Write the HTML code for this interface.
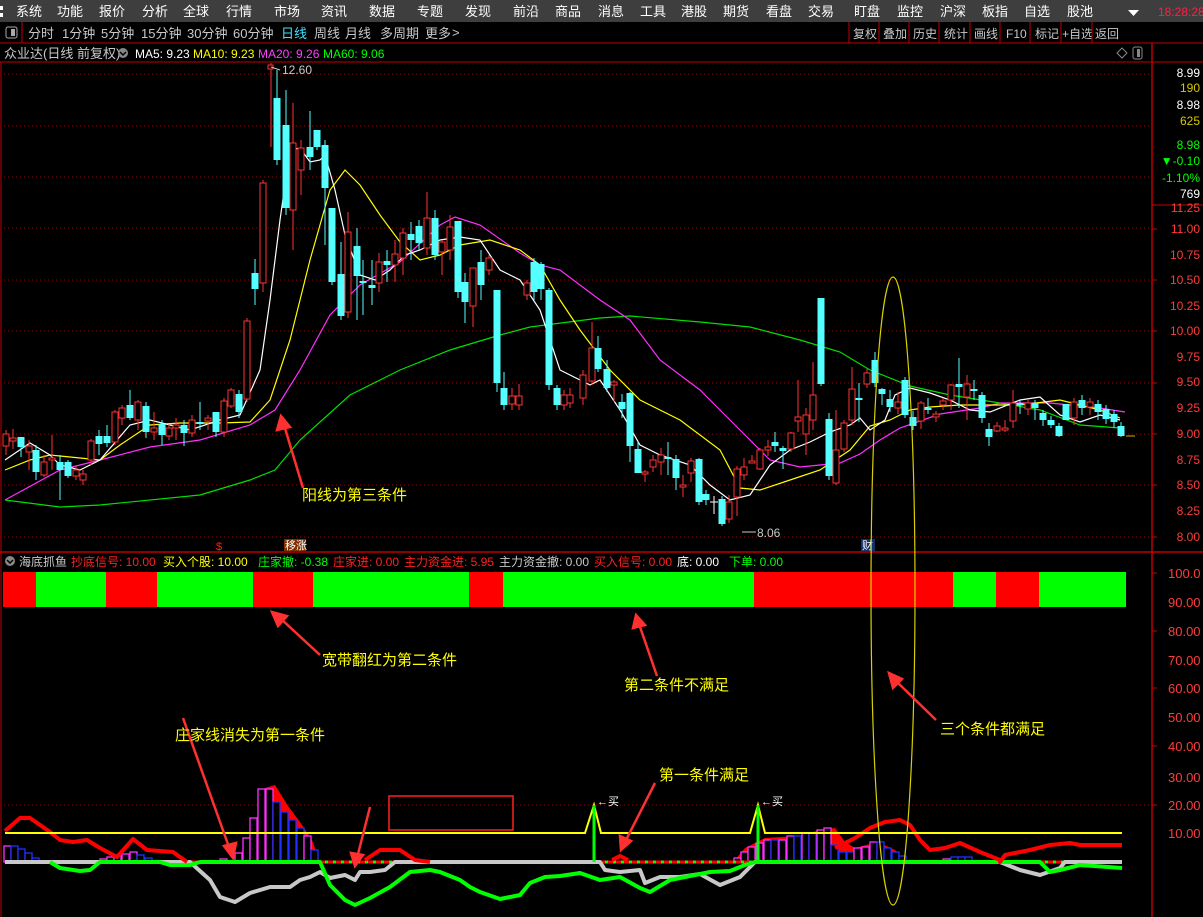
<!DOCTYPE html>
<html><head><meta charset="utf-8"><style>
html,body{margin:0;padding:0;background:#000;width:1203px;height:917px;overflow:hidden;font-family:"Liberation Sans","Noto Sans CJK SC",sans-serif}
svg{position:absolute;left:0;top:0}
.t{font-family:"Liberation Sans","Noto Sans CJK SC",sans-serif}
.c{stroke:#54ffff;stroke-width:1}
.cf{fill:#54ffff}
.r{stroke:#ff3232;stroke-width:1}
.rf{fill:#000;stroke:#ff3232;stroke-width:1}
.g{stroke:#a00000;stroke-dasharray:1 3;stroke-width:1}
</style></head><body>
<svg width="1203" height="917" xmlns="http://www.w3.org/2000/svg" class="t">
<rect x="0" y="0" width="1203" height="22" fill="#3e3e3e"/>
<rect x="0" y="6" width="3" height="4" fill="#fff"/><rect x="0" y="13" width="3" height="4" fill="#fff"/>
<g fill="#fff" font-size="13">
<text x="16" y="16">系统</text><text x="57" y="16">功能</text><text x="99" y="16">报价</text><text x="142" y="16">分析</text><text x="183" y="16">全球</text><text x="226" y="16">行情</text><text x="274" y="16">市场</text><text x="321" y="16">资讯</text><text x="369" y="16">数据</text><text x="417" y="16">专题</text><text x="465" y="16">发现</text><text x="513" y="16">前沿</text><text x="555" y="16">商品</text><text x="598" y="16">消息</text><text x="640" y="16">工具</text><text x="681" y="16">港股</text><text x="723" y="16">期货</text><text x="766" y="16">看盘</text><text x="808" y="16">交易</text><text x="854" y="16">盯盘</text><text x="897" y="16">监控</text><text x="940" y="16">沪深</text><text x="982" y="16">板指</text><text x="1024" y="16">自选</text><text x="1067" y="16">股池</text>
</g>
<path d="M1128 10 L1139 10 L1133.5 16 Z" fill="#fff"/>
<text x="1158" y="16" fill="#ff2040" font-size="12">18:28:28</text>
<line x1="0" y1="43" x2="1203" y2="43" stroke="#c00000"/>
<line x1="22" y1="22" x2="22" y2="43" stroke="#c00000"/>
<rect x="6" y="27" width="11" height="11" rx="2" fill="none" stroke="#aaa"/><rect x="11" y="29" width="4" height="7" fill="#aaa"/>
<g fill="#c8c8c8" font-size="13">
<text x="28" y="38">分时</text><text x="62" y="38">1分钟</text><text x="101" y="38">5分钟</text><text x="141" y="38">15分钟</text><text x="187" y="38">30分钟</text><text x="233" y="38">60分钟</text><text x="281" y="38" fill="#40e0ff">日线</text><text x="314" y="38">周线</text><text x="345" y="38">月线</text><text x="380" y="38">多周期</text><text x="425" y="38">更多</text><text x="452" y="37">&gt;</text>
</g>
<g fill="#c8c8c8" font-size="12">
<text x="853" y="38">复权</text><text x="883" y="38">叠加</text><text x="913" y="38">历史</text><text x="944" y="38">统计</text><text x="974" y="38">画线</text><text x="1006" y="38">F10</text><text x="1035" y="38">标记</text><text x="1062" y="38">+自选</text><text x="1095" y="38">返回</text>
</g>
<g stroke="#c00000"><line x1="849" y1="22" x2="849" y2="43"/><line x1="879" y1="22" x2="879" y2="43"/><line x1="909" y1="22" x2="909" y2="43"/><line x1="939" y1="22" x2="939" y2="43"/><line x1="970" y1="22" x2="970" y2="43"/><line x1="1000" y1="22" x2="1000" y2="43"/><line x1="1030" y1="22" x2="1030" y2="43"/><line x1="1061" y1="22" x2="1061" y2="43"/><line x1="1092" y1="22" x2="1092" y2="43"/></g>
<text x="4" y="58" fill="#c8c8c8" font-size="13">众业达(日线 前复权)</text>
<circle cx="123" cy="53" r="5" fill="#888"/><path d="M120 52 L123 55 L126 52" stroke="#000" fill="none" stroke-width="1.5"/>
<g font-size="12"><text x="135" y="58" fill="#fff">MA5: 9.23</text><text x="193" y="58" fill="#ffff00">MA10: 9.23</text><text x="258" y="58" fill="#ff40ff">MA20: 9.26</text><text x="323" y="58" fill="#00ff00">MA60: 9.06</text></g>
<path d="M1122 48 L1127 53 L1122 58 L1117 53 Z" fill="none" stroke="#888"/>
<rect x="1133" y="47" width="9" height="12" rx="2" fill="none" stroke="#888"/><rect x="1137" y="49" width="3" height="8" fill="#888"/>
<line x1="0" y1="62" x2="1203" y2="62" stroke="#c00000"/>
<line x1="1152" y1="43" x2="1152" y2="917" stroke="#c00000" stroke-width="1.5"/>
<line x1="1" y1="62" x2="1" y2="917" stroke="#c00000"/>
<line x1="0" y1="552" x2="1152" y2="552" stroke="#c00000" stroke-width="1.5"/>
<line x1="1152" y1="552" x2="1203" y2="552" stroke="#c00000" stroke-width="1.5"/>
<line x1="1152" y1="205" x2="1203" y2="205" stroke="#c00000"/>
<g font-size="12" text-anchor="end">
<text x="1200" y="77" fill="#fff">8.99</text><text x="1200" y="92" fill="#d8c800">190</text><text x="1200" y="109" fill="#fff">8.98</text><text x="1200" y="125" fill="#d8c800">625</text><text x="1200" y="149" fill="#00ff00">8.98</text><text x="1200" y="165" fill="#00ff00">▼-0.10</text><text x="1200" y="182" fill="#00ff00">-1.10%</text><text x="1200" y="198" fill="#fff">769</text>
</g>
<g font-size="12" fill="#ff3c3c" text-anchor="end">
<text x="1200" y="212">11.25</text><text x="1200" y="233">11.00</text><text x="1200" y="259">10.75</text><text x="1200" y="284">10.50</text><text x="1200" y="310">10.25</text><text x="1200" y="335">10.00</text><text x="1200" y="361">9.75</text><text x="1200" y="386">9.50</text><text x="1200" y="412">9.25</text><text x="1200" y="438">9.00</text><text x="1200" y="464">8.75</text><text x="1200" y="489">8.50</text><text x="1200" y="515">8.25</text><text x="1200" y="541">8.00</text>
</g>
<g stroke="#c00000"><line x1="1152" y1="229" x2="1157" y2="229"/><line x1="1152" y1="280" x2="1157" y2="280"/><line x1="1152" y1="331" x2="1157" y2="331"/><line x1="1152" y1="383" x2="1157" y2="383"/><line x1="1152" y1="434" x2="1157" y2="434"/><line x1="1152" y1="485" x2="1157" y2="485"/><line x1="1152" y1="537" x2="1157" y2="537"/></g>
<g class="g"><line x1="4" y1="74" x2="1150" y2="74"/><line x1="4" y1="126" x2="1150" y2="126"/><line x1="4" y1="177" x2="1150" y2="177"/><line x1="4" y1="228" x2="1150" y2="228"/><line x1="4" y1="280" x2="1150" y2="280"/><line x1="4" y1="331" x2="1150" y2="331"/><line x1="4" y1="383" x2="1150" y2="383"/><line x1="4" y1="434" x2="1150" y2="434"/><line x1="4" y1="485" x2="1150" y2="485"/><line x1="4" y1="537" x2="1150" y2="537"/></g>
<g fill="none" stroke-width="1.2">
<polyline stroke="#00e000" points="5,500 60,507 100,505 200,495 250,480 275,470 300,440 350,395 400,370 450,350 500,335 530,327 600,318 630,316 700,322 750,327 800,340 840,352 870,370 910,386 950,395 1000,403 1040,410 1080,425 1120,428"/>
<polyline stroke="#ff30ff" points="5,500 60,470 100,460 150,447 200,440 250,425 275,410 300,370 330,315 360,285 400,262 440,225 455,217 480,225 520,253 540,265 560,270 600,300 630,320 660,360 700,390 730,420 770,460 800,467 840,463 860,454 880,440 900,428 940,414 980,408 1000,403 1050,403 1100,408 1125,412"/>
<polyline stroke="#ffff00" points="5,470 30,460 50,455 80,458 100,460 120,445 150,425 180,423 220,423 250,422 270,400 290,340 310,260 330,190 345,170 360,185 380,215 400,242 420,260 440,255 460,245 490,240 520,250 540,265 560,300 580,330 610,370 640,400 680,420 720,450 740,488 760,490 790,480 820,470 850,450 870,426 890,420 910,410 930,407 960,405 990,405 1020,405 1060,400 1100,410 1120,418"/>
<polyline stroke="#ffffff" points="5,460 30,443 50,455 60,465 80,470 100,460 130,425 150,420 170,425 190,430 220,420 240,415 260,370 270,300 280,220 290,150 300,148 310,162 320,160 325,155 335,190 345,235 360,275 375,280 390,270 405,255 420,250 440,240 460,237 480,240 500,270 520,280 540,310 560,370 590,385 600,380 620,410 640,445 660,455 690,465 710,485 730,500 750,495 770,465 790,450 810,442 830,432 850,425 860,418 870,430 885,420 895,395 910,388 930,393 950,400 970,410 990,412 1020,400 1040,397 1060,415 1080,422 1100,415 1120,420"/>
</g>
<g>
<line class="r" x1="6" x2="6" y1="430" y2="455"/><rect class="rf" x="3" y="434" width="6" height="12"/>
<line class="r" x1="13" x2="13" y1="429" y2="449"/><rect class="rf" x="10" y="438" width="6" height="3"/>
<line class="c" x1="21" x2="21" y1="437" y2="457"/><rect class="cf" x="17.5" y="437" width="7" height="10"/>
<line class="r" x1="29" x2="29" y1="440" y2="470"/><rect class="rf" x="26" y="446" width="6" height="6"/>
<line class="c" x1="36" x2="36" y1="445" y2="480"/><rect class="cf" x="32.5" y="450" width="7" height="22"/>
<line class="r" x1="44" x2="44" y1="455" y2="477"/><rect class="rf" x="41" y="462" width="6" height="13"/>
<line class="r" x1="52" x2="52" y1="435" y2="470"/><rect class="rf" x="49" y="458" width="6" height="2"/>
<line class="c" x1="60" x2="60" y1="455" y2="500"/><rect class="cf" x="56.5" y="462" width="7" height="8"/>
<line class="c" x1="68" x2="68" y1="460" y2="478"/><rect class="cf" x="64.5" y="462" width="7" height="14"/>
<line class="r" x1="76" x2="76" y1="465" y2="480"/><rect class="rf" x="73" y="470" width="6" height="6"/>
<line class="r" x1="83" x2="83" y1="470" y2="485"/><rect class="rf" x="80" y="474" width="6" height="6"/>
<line class="r" x1="91" x2="91" y1="439" y2="465"/><rect class="rf" x="88" y="441" width="6" height="19"/>
<line class="c" x1="99" x2="99" y1="430" y2="455"/><rect class="cf" x="95.5" y="436" width="7" height="8"/>
<line class="c" x1="107" x2="107" y1="425" y2="447"/><rect class="cf" x="103.5" y="436" width="7" height="7"/>
<line class="r" x1="115" x2="115" y1="410" y2="445"/><rect class="rf" x="112" y="412" width="6" height="30"/>
<line class="r" x1="122" x2="122" y1="405" y2="425"/><rect class="rf" x="119" y="408" width="6" height="10"/>
<line class="c" x1="130" x2="130" y1="390" y2="420"/><rect class="cf" x="126.5" y="405" width="7" height="13"/>
<line class="r" x1="138" x2="138" y1="400" y2="430"/><rect class="rf" x="135" y="402" width="6" height="18"/>
<line class="c" x1="146" x2="146" y1="402" y2="438"/><rect class="cf" x="142.5" y="406" width="7" height="26"/>
<line class="r" x1="154" x2="154" y1="412" y2="440"/><rect class="rf" x="151" y="428" width="6" height="4"/>
<line class="c" x1="162" x2="162" y1="420" y2="445"/><rect class="cf" x="158.5" y="424" width="7" height="11"/>
<line class="r" x1="169" x2="169" y1="424" y2="440"/><rect class="rf" x="166" y="428" width="6" height="8"/>
<line class="r" x1="176" x2="176" y1="418" y2="440"/><rect class="rf" x="173" y="425" width="6" height="3"/>
<line class="c" x1="184" x2="184" y1="420" y2="446"/><rect class="cf" x="180.5" y="425" width="7" height="8"/>
<line class="r" x1="192" x2="192" y1="415" y2="437"/><rect class="rf" x="189" y="420" width="6" height="13"/>
<line class="c" x1="200" x2="200" y1="402" y2="430"/><rect class="cf" x="196.5" y="422" width="7" height="2"/>
<line class="r" x1="208" x2="208" y1="415" y2="430"/><rect class="rf" x="205" y="418" width="6" height="3"/>
<line class="c" x1="216" x2="216" y1="412" y2="437"/><rect class="cf" x="212.5" y="412" width="7" height="20"/>
<line class="r" x1="224" x2="224" y1="398" y2="437"/><rect class="rf" x="221" y="401" width="6" height="31"/>
<line class="r" x1="231" x2="231" y1="388" y2="408"/><rect class="rf" x="228" y="390" width="6" height="16"/>
<line class="c" x1="239" x2="239" y1="390" y2="418"/><rect class="cf" x="235.5" y="394" width="7" height="18"/>
<line class="r" x1="247" x2="247" y1="318" y2="402"/><rect class="rf" x="244" y="321" width="6" height="78"/>
<line class="c" x1="255" x2="255" y1="259" y2="305"/><rect class="cf" x="251.5" y="273" width="7" height="16"/>
<line class="r" x1="263" x2="263" y1="180" y2="292"/><rect class="rf" x="260" y="183" width="6" height="100"/>
<line class="r" x1="271" x2="271" y1="63" y2="147"/><rect class="rf" x="268" y="65" width="5" height="4"/>
<line class="c" x1="277" x2="277" y1="70" y2="165"/><rect class="cf" x="273.5" y="98" width="7" height="62"/>
<line class="c" x1="286" x2="286" y1="90" y2="215"/><rect class="cf" x="282.5" y="125" width="7" height="83"/>
<line class="r" x1="293" x2="293" y1="103" y2="250"/><rect class="rf" x="290" y="143" width="6" height="67"/>
<line class="r" x1="301" x2="301" y1="140" y2="195"/><rect class="rf" x="298" y="148" width="6" height="22"/>
<line class="c" x1="310" x2="310" y1="111" y2="170"/><rect class="cf" x="306.5" y="147" width="7" height="10"/>
<line class="c" x1="317" x2="317" y1="130" y2="150"/><rect class="cf" x="313.5" y="130" width="7" height="17"/>
<line class="c" x1="325" x2="325" y1="140" y2="245"/><rect class="cf" x="321.5" y="145" width="7" height="43"/>
<line class="c" x1="332" x2="332" y1="208" y2="285"/><rect class="cf" x="328.5" y="208" width="7" height="74"/>
<line class="c" x1="341" x2="341" y1="242" y2="320"/><rect class="cf" x="337.5" y="274" width="7" height="42"/>
<line class="r" x1="348" x2="348" y1="212" y2="318"/><rect class="rf" x="345" y="232" width="6" height="80"/>
<line class="c" x1="357" x2="357" y1="228" y2="320"/><rect class="cf" x="353.5" y="246" width="7" height="30"/>
<line class="c" x1="363" x2="363" y1="260" y2="315"/><rect class="cf" x="359.5" y="281" width="7" height="2"/>
<line class="c" x1="372" x2="372" y1="260" y2="305"/><rect class="cf" x="368.5" y="285" width="7" height="3"/>
<line class="r" x1="379" x2="379" y1="253" y2="292"/><rect class="rf" x="376" y="262" width="6" height="21"/>
<line class="c" x1="387" x2="387" y1="250" y2="282"/><rect class="cf" x="383.5" y="261" width="7" height="4"/>
<line class="r" x1="395" x2="395" y1="240" y2="282"/><rect class="rf" x="392" y="254" width="6" height="11"/>
<line class="r" x1="403" x2="403" y1="228" y2="275"/><rect class="rf" x="400" y="233" width="6" height="25"/>
<line class="c" x1="411" x2="411" y1="222" y2="260"/><rect class="cf" x="407.5" y="234" width="7" height="6"/>
<line class="c" x1="419" x2="419" y1="220" y2="250"/><rect class="cf" x="415.5" y="226" width="7" height="17"/>
<line class="r" x1="427" x2="427" y1="192" y2="255"/><rect class="rf" x="424" y="218" width="6" height="30"/>
<line class="c" x1="435" x2="435" y1="210" y2="260"/><rect class="cf" x="431.5" y="218" width="7" height="37"/>
<line class="r" x1="442" x2="442" y1="240" y2="275"/><rect class="rf" x="439" y="242" width="6" height="10"/>
<line class="r" x1="450" x2="450" y1="215" y2="260"/><rect class="rf" x="447" y="227" width="6" height="23"/>
<line class="c" x1="458" x2="458" y1="221" y2="298"/><rect class="cf" x="454.5" y="221" width="7" height="71"/>
<line class="c" x1="465" x2="465" y1="273" y2="323"/><rect class="cf" x="461.5" y="282" width="7" height="20"/>
<line class="r" x1="473" x2="473" y1="268" y2="327"/><rect class="rf" x="470" y="268" width="6" height="38"/>
<line class="c" x1="481" x2="481" y1="250" y2="300"/><rect class="cf" x="477.5" y="262" width="7" height="23"/>
<line class="r" x1="489" x2="489" y1="255" y2="275"/><rect class="rf" x="486" y="258" width="6" height="12"/>
<line class="c" x1="497" x2="497" y1="290" y2="392"/><rect class="cf" x="493.5" y="290" width="7" height="93"/>
<line class="c" x1="504" x2="504" y1="372" y2="410"/><rect class="cf" x="500.5" y="388" width="7" height="17"/>
<line class="r" x1="512" x2="512" y1="388" y2="410"/><rect class="rf" x="509" y="396" width="6" height="8"/>
<line class="r" x1="519" x2="519" y1="384" y2="410"/><rect class="rf" x="516" y="396" width="6" height="9"/>
<line class="r" x1="527" x2="527" y1="280" y2="300"/><rect class="rf" x="524" y="283" width="6" height="12"/>
<line class="c" x1="534" x2="534" y1="258" y2="300"/><rect class="cf" x="530.5" y="262" width="7" height="30"/>
<line class="c" x1="541" x2="541" y1="262" y2="300"/><rect class="cf" x="537.5" y="264" width="7" height="25"/>
<line class="c" x1="549" x2="549" y1="288" y2="390"/><rect class="cf" x="545.5" y="290" width="7" height="95"/>
<line class="c" x1="557" x2="557" y1="385" y2="410"/><rect class="cf" x="553.5" y="388" width="7" height="17"/>
<line class="r" x1="564" x2="564" y1="390" y2="410"/><rect class="rf" x="561" y="395" width="6" height="10"/>
<line class="r" x1="570" x2="570" y1="388" y2="408"/><rect class="rf" x="567" y="395" width="6" height="8"/>
<line class="r" x1="583" x2="583" y1="370" y2="405"/><rect class="rf" x="580" y="375" width="6" height="23"/>
<line class="r" x1="592" x2="592" y1="322" y2="385"/><rect class="rf" x="589" y="348" width="6" height="33"/>
<line class="c" x1="598" x2="598" y1="336" y2="372"/><rect class="cf" x="594.5" y="348" width="7" height="21"/>
<line class="c" x1="607" x2="607" y1="360" y2="392"/><rect class="cf" x="603.5" y="369" width="7" height="19"/>
<line class="r" x1="614" x2="614" y1="380" y2="402"/><rect class="rf" x="611" y="382" width="6" height="3"/>
<line class="c" x1="622" x2="622" y1="394" y2="418"/><rect class="cf" x="618.5" y="402" width="7" height="7"/>
<line class="c" x1="630" x2="630" y1="392" y2="462"/><rect class="cf" x="626.5" y="393" width="7" height="53"/>
<line class="c" x1="638" x2="638" y1="442" y2="473"/><rect class="cf" x="634.5" y="449" width="7" height="24"/>
<line class="r" x1="645" x2="645" y1="470" y2="482"/><rect class="rf" x="642" y="472" width="6" height="2"/>
<line class="r" x1="653" x2="653" y1="455" y2="472"/><rect class="rf" x="650" y="460" width="6" height="7"/>
<line class="r" x1="661" x2="661" y1="448" y2="475"/><rect class="rf" x="658" y="455" width="6" height="7"/>
<line class="c" x1="668" x2="668" y1="442" y2="475"/><rect class="cf" x="664.5" y="457" width="7" height="2"/>
<line class="c" x1="676" x2="676" y1="455" y2="490"/><rect class="cf" x="672.5" y="459" width="7" height="19"/>
<line class="r" x1="683" x2="683" y1="475" y2="497"/><rect class="rf" x="680" y="485" width="6" height="2"/>
<line class="r" x1="691" x2="691" y1="458" y2="482"/><rect class="rf" x="688" y="461" width="6" height="12"/>
<line class="c" x1="699" x2="699" y1="458" y2="505"/><rect class="cf" x="695.5" y="459" width="7" height="43"/>
<line class="c" x1="706" x2="706" y1="490" y2="505"/><rect class="cf" x="702.5" y="494" width="7" height="6"/>
<line x1="714" x2="714" y1="496" y2="514" stroke="#fff"/><line x1="710" x2="718" y1="502" y2="502" stroke="#fff"/>
<line class="c" x1="722" x2="722" y1="496" y2="526"/><rect class="cf" x="718.5" y="499" width="7" height="25"/>
<line class="r" x1="729" x2="729" y1="495" y2="523"/><rect class="rf" x="726" y="502" width="6" height="17"/>
<line class="r" x1="737" x2="737" y1="466" y2="516"/><rect class="rf" x="734" y="469" width="6" height="28"/>
<line class="r" x1="744" x2="744" y1="458" y2="480"/><rect class="rf" x="741" y="467" width="6" height="8"/>
<line class="r" x1="752" x2="752" y1="455" y2="463"/><rect class="rf" x="749" y="461" width="6" height="2"/>
<line class="r" x1="760" x2="760" y1="448" y2="470"/><rect class="rf" x="757" y="450" width="6" height="19"/>
<line class="r" x1="768" x2="768" y1="440" y2="456"/><rect class="rf" x="765" y="447" width="6" height="3"/>
<line class="c" x1="775" x2="775" y1="432" y2="452"/><rect class="cf" x="771.5" y="442" width="7" height="4"/>
<line class="c" x1="783" x2="783" y1="446" y2="469"/><rect class="cf" x="779.5" y="448" width="7" height="3"/>
<line class="r" x1="791" x2="791" y1="432" y2="452"/><rect class="rf" x="788" y="433" width="6" height="16"/>
<line class="r" x1="798" x2="798" y1="380" y2="432"/><rect class="rf" x="795" y="417" width="6" height="4"/>
<line class="r" x1="806" x2="806" y1="408" y2="455"/><rect class="rf" x="803" y="415" width="6" height="19"/>
<line class="r" x1="813" x2="813" y1="362" y2="430"/><rect class="rf" x="810" y="395" width="6" height="25"/>
<line class="c" x1="821" x2="821" y1="298" y2="386"/><rect class="cf" x="817.5" y="298" width="7" height="86"/>
<line class="c" x1="829" x2="829" y1="413" y2="480"/><rect class="cf" x="825.5" y="419" width="7" height="57"/>
<line class="r" x1="836" x2="836" y1="410" y2="485"/><rect class="rf" x="833" y="450" width="6" height="33"/>
<line class="r" x1="844" x2="844" y1="420" y2="452"/><rect class="rf" x="841" y="423" width="6" height="26"/>
<line class="r" x1="852" x2="852" y1="367" y2="425"/><rect class="rf" x="849" y="389" width="6" height="31"/>
<line class="c" x1="859" x2="859" y1="383" y2="422"/><rect class="cf" x="855.5" y="398" width="7" height="2"/>
<line class="r" x1="867" x2="867" y1="369" y2="388"/><rect class="rf" x="864" y="373" width="6" height="11"/>
<line class="c" x1="875" x2="875" y1="352" y2="387"/><rect class="cf" x="871.5" y="360" width="7" height="23"/>
<line class="c" x1="882" x2="882" y1="388" y2="405"/><rect class="cf" x="878.5" y="389" width="7" height="5"/>
<line class="c" x1="890" x2="890" y1="390" y2="412"/><rect class="cf" x="886.5" y="399" width="7" height="8"/>
<line class="r" x1="898" x2="898" y1="392" y2="414"/><rect class="rf" x="895" y="402" width="6" height="6"/>
<line class="c" x1="905" x2="905" y1="377" y2="418"/><rect class="cf" x="901.5" y="380" width="7" height="35"/>
<line class="c" x1="913" x2="913" y1="411" y2="430"/><rect class="cf" x="909.5" y="417" width="7" height="9"/>
<line class="r" x1="921" x2="921" y1="401" y2="429"/><rect class="rf" x="918" y="403" width="6" height="18"/>
<line class="c" x1="928" x2="928" y1="398" y2="414"/><rect class="cf" x="924.5" y="408" width="7" height="2"/>
<line class="r" x1="936" x2="936" y1="411" y2="422"/><rect class="rf" x="933" y="414" width="6" height="3"/>
<line class="r" x1="943" x2="943" y1="398" y2="410"/><rect class="rf" x="940" y="401" width="6" height="4"/>
<line class="r" x1="951" x2="951" y1="384" y2="410"/><rect class="rf" x="948" y="385" width="6" height="15"/>
<line class="c" x1="959" x2="959" y1="358" y2="408"/><rect class="cf" x="955.5" y="384" width="7" height="3"/>
<line class="r" x1="967" x2="967" y1="375" y2="420"/><rect class="rf" x="964" y="384" width="6" height="13"/>
<line class="c" x1="974" x2="974" y1="380" y2="400"/><rect class="cf" x="970.5" y="389" width="7" height="2"/>
<line class="c" x1="982" x2="982" y1="392" y2="423"/><rect class="cf" x="978.5" y="395" width="7" height="23"/>
<line class="c" x1="989" x2="989" y1="423" y2="446"/><rect class="cf" x="985.5" y="429" width="7" height="8"/>
<line class="r" x1="997" x2="997" y1="422" y2="432"/><rect class="rf" x="994" y="426" width="6" height="5"/>
<line class="r" x1="1005" x2="1005" y1="420" y2="432"/><rect class="rf" x="1002" y="428" width="6" height="2"/>
<line class="r" x1="1013" x2="1013" y1="390" y2="428"/><rect class="rf" x="1010" y="403" width="6" height="18"/>
<line class="c" x1="1020" x2="1020" y1="400" y2="414"/><rect class="cf" x="1016.5" y="403" width="7" height="2"/>
<line class="r" x1="1028" x2="1028" y1="400" y2="415"/><rect class="rf" x="1025" y="403" width="6" height="6"/>
<line class="c" x1="1035" x2="1035" y1="400" y2="420"/><rect class="cf" x="1031.5" y="403" width="7" height="5"/>
<line class="c" x1="1043" x2="1043" y1="410" y2="426"/><rect class="cf" x="1039.5" y="413" width="7" height="7"/>
<line class="c" x1="1051" x2="1051" y1="416" y2="428"/><rect class="cf" x="1047.5" y="420" width="7" height="5"/>
<line class="c" x1="1059" x2="1059" y1="423" y2="437"/><rect class="cf" x="1055.5" y="426" width="7" height="10"/>
<line class="c" x1="1066" x2="1066" y1="404" y2="420"/><rect class="cf" x="1062.5" y="404" width="7" height="16"/>
<line class="r" x1="1074" x2="1074" y1="398" y2="425"/><rect class="rf" x="1071" y="402" width="6" height="16"/>
<line class="c" x1="1082" x2="1082" y1="395" y2="415"/><rect class="cf" x="1078.5" y="400" width="7" height="8"/>
<line class="r" x1="1090" x2="1090" y1="398" y2="415"/><rect class="rf" x="1087" y="402" width="6" height="5"/>
<line class="c" x1="1098" x2="1098" y1="400" y2="420"/><rect class="cf" x="1094.5" y="404" width="7" height="8"/>
<line class="c" x1="1106" x2="1106" y1="405" y2="424"/><rect class="cf" x="1102.5" y="409" width="7" height="10"/>
<line class="c" x1="1114" x2="1114" y1="410" y2="428"/><rect class="cf" x="1110.5" y="414" width="7" height="8"/>
<line class="c" x1="1121" x2="1121" y1="422" y2="437"/><rect class="cf" x="1117.5" y="426" width="7" height="10"/>
</g>
<line x1="1126" y1="436" x2="1135" y2="436" stroke="#c8b400"/>
<text x="282" y="74" fill="#c8c8c8" font-size="12">12.60</text><path d="M271 67 L280 70" stroke="#c8c8c8"/>
<text x="757" y="537" fill="#c8c8c8" font-size="12">8.06</text><path d="M742 532 L756 532" stroke="#c8c8c8"/>
<text x="216" y="550" fill="#ff2020" font-size="11">$</text>
<rect x="284" y="539" width="22" height="12" fill="#7a3000"/><text x="285" y="549" fill="#fff" font-size="11">移涨</text>
<rect x="861" y="539" width="14" height="12" fill="#103070"/><text x="862" y="549" fill="#fff" font-size="11">财</text>
<circle cx="10" cy="561" r="5" fill="#888"/><path d="M7 560 L10 563 L13 560" stroke="#000" fill="none" stroke-width="1.5"/>
<g font-size="12">
<text x="19" y="566" fill="#c8c8c8">海底抓鱼</text><text x="71" y="566" fill="#ff2020">抄底信号: 10.00</text><text x="163" y="566" fill="#ffff00">买入个股: 10.00</text><text x="258" y="566" fill="#00ff00">庄家撤: -0.38</text><text x="333" y="566" fill="#ff2020">庄家进: 0.00</text><text x="404" y="566" fill="#ff2020">主力资金进: 5.95</text><text x="499" y="566" fill="#c8c8c8">主力资金撤: 0.00</text><text x="594" y="566" fill="#ff2020">买入信号: 0.00</text><text x="677" y="566" fill="#fff">底: 0.00</text><text x="729" y="566" fill="#00ff00">下单: 0.00</text>
</g>
<g>
<rect x="3" y="572" width="33" height="35" fill="#ff0000"/><rect x="36" y="572" width="70" height="35" fill="#00ff00"/><rect x="106" y="572" width="51" height="35" fill="#ff0000"/><rect x="157" y="572" width="96" height="35" fill="#00ff00"/><rect x="253" y="572" width="60" height="35" fill="#ff0000"/><rect x="313" y="572" width="156" height="35" fill="#00ff00"/><rect x="469" y="572" width="34" height="35" fill="#ff0000"/><rect x="503" y="572" width="251" height="35" fill="#00ff00"/><rect x="754" y="572" width="199" height="35" fill="#ff0000"/><rect x="953" y="572" width="43" height="35" fill="#00ff00"/><rect x="996" y="572" width="43" height="35" fill="#ff0000"/><rect x="1039" y="572" width="87" height="35" fill="#00ff00"/>
</g>
<g font-size="13" fill="#ff3c3c">
<text x="1168" y="578">100.0</text><text x="1168" y="607">90.00</text><text x="1168" y="636">80.00</text><text x="1168" y="665">70.00</text><text x="1168" y="693">60.00</text><text x="1168" y="722">50.00</text><text x="1168" y="751">40.00</text><text x="1168" y="782">30.00</text><text x="1168" y="810">20.00</text><text x="1168" y="838">10.00</text>
</g>
<g stroke="#c00000"><line x1="1152" y1="573" x2="1157" y2="573"/><line x1="1152" y1="631" x2="1157" y2="631"/><line x1="1152" y1="688" x2="1157" y2="688"/><line x1="1152" y1="746" x2="1157" y2="746"/><line x1="1152" y1="805" x2="1157" y2="805"/></g>
<line x1="4" y1="805" x2="1150" y2="805" class="g"/>
<g fill="#ff0000">
<polygon points="240,855 250,835 258,815 265,788 275,785 288,806 300,822 312,840 320,862 236,862"/>
<polygon points="733,862 745,848 765,838 800,836 820,830 835,828 845,842 855,848 870,844 880,843 895,850 905,862"/>
</g>
<g fill="#000" stroke-width="1.3">
<rect x="4" y="846" width="7" height="16" stroke="#ff30ff"/><rect x="11" y="846" width="7" height="16" stroke="#2030ff"/><rect x="18" y="849" width="7" height="13" stroke="#2030ff"/><rect x="25" y="853" width="7" height="9" stroke="#2030ff"/><rect x="32" y="858" width="7" height="4" stroke="#2030ff"/>
<rect x="100" y="859" width="7" height="3" stroke="#ff30ff"/><rect x="107" y="857" width="7" height="5" stroke="#ff30ff"/><rect x="114" y="855" width="7" height="7" stroke="#ff30ff"/><rect x="122" y="854" width="7" height="8" stroke="#ff30ff"/><rect x="130" y="852" width="7" height="10" stroke="#ff30ff"/><rect x="137" y="855" width="7" height="7" stroke="#2030ff"/><rect x="145" y="858" width="7" height="4" stroke="#2030ff"/>
<rect x="220" y="859" width="7" height="3" stroke="#ff30ff"/><rect x="235" y="853" width="7" height="9" stroke="#ff30ff"/><rect x="243" y="838" width="7" height="24" stroke="#ff30ff"/><rect x="250" y="818" width="7" height="44" stroke="#ff30ff"/><rect x="258" y="789" width="7" height="73" stroke="#ff30ff"/><rect x="266" y="789" width="7" height="73" stroke="#ff30ff"/><rect x="273" y="802" width="7" height="60" stroke="#2030ff"/><rect x="281" y="812" width="7" height="50" stroke="#2030ff"/><rect x="289" y="820" width="7" height="42" stroke="#2030ff"/><rect x="297" y="828" width="7" height="34" stroke="#2030ff"/><rect x="304" y="836" width="7" height="26" stroke="#ff30ff"/><rect x="311" y="850" width="7" height="12" stroke="#2030ff"/>
<rect x="734" y="858" width="7" height="4" stroke="#ff30ff"/><rect x="741" y="852" width="7" height="10" stroke="#ff30ff"/><rect x="748" y="847" width="7" height="15" stroke="#ff30ff"/><rect x="756" y="843" width="7" height="19" stroke="#ff30ff"/><rect x="764" y="840" width="7" height="22" stroke="#ff30ff"/><rect x="771" y="840" width="7" height="22" stroke="#2030ff"/><rect x="779" y="840" width="7" height="22" stroke="#ff30ff"/><rect x="787" y="836" width="7" height="26" stroke="#ff30ff"/><rect x="794" y="836" width="7" height="26" stroke="#2030ff"/><rect x="802" y="833" width="7" height="29" stroke="#ff30ff"/><rect x="809" y="833" width="7" height="29" stroke="#2030ff"/><rect x="817" y="830" width="7" height="32" stroke="#ff30ff"/><rect x="824" y="828" width="7" height="34" stroke="#ff30ff"/><rect x="831" y="845" width="7" height="17" stroke="#2030ff"/><rect x="839" y="852" width="7" height="10" stroke="#2030ff"/><rect x="847" y="852" width="7" height="10" stroke="#2030ff"/><rect x="854" y="848" width="7" height="14" stroke="#ff30ff"/><rect x="862" y="847" width="7" height="15" stroke="#ff30ff"/><rect x="870" y="842" width="7" height="20" stroke="#ff30ff"/><rect x="877" y="842" width="7" height="20" stroke="#2030ff"/><rect x="884" y="848" width="7" height="14" stroke="#2030ff"/><rect x="892" y="852" width="7" height="10" stroke="#2030ff"/><rect x="899" y="856" width="7" height="6" stroke="#2030ff"/>
<rect x="943" y="859" width="7" height="3" stroke="#ff30ff"/><rect x="951" y="857" width="7" height="5" stroke="#2030ff"/><rect x="958" y="857" width="7" height="5" stroke="#2030ff"/><rect x="965" y="857" width="7" height="5" stroke="#2030ff"/>
</g>
<line x1="5" y1="862" x2="1122" y2="862" stroke="#ff0000" stroke-width="3"/>
<line x1="5" y1="862" x2="1122" y2="862" stroke="#00ff00" stroke-width="3" stroke-dasharray="3 5"/>
<g fill="none" stroke-linejoin="round">
<polyline stroke="#c8c8c8" stroke-width="4" points="5,862 190,862 210,880 220,897 235,902 250,893 270,887 290,887 300,880 310,877 320,872 330,878 345,875 355,880 360,872 370,872 385,870 395,862 600,862 605,870 620,872 640,870 645,883 660,877 680,877 700,874 720,885 740,877 755,862 1000,862 1020,870 1040,875 1060,868 1065,862 1122,862"/>
<polyline stroke="#00ff00" stroke-width="4" points="50,862 60,868 80,871 90,870 100,862 160,862 170,865 190,865 200,862 320,862 330,885 345,900 355,905 370,898 390,887 410,872 430,870 440,872 460,880 470,887 480,892 500,899 520,895 530,883 545,877 560,876 580,873 600,880 620,877 640,888 650,892 670,880 690,876 710,872 730,871 745,865 755,862 1040,862 1050,872 1060,870 1080,865 1122,868"/>
<polyline stroke="#ff0000" stroke-width="4" points="5,831 20,818 30,818 50,832 60,840 73,842 87,840 100,848 117,857 133,839 147,850 173,852 187,862"/>
<polyline stroke="#ff0000" stroke-width="4" points="365,860 380,850 400,850 415,860 430,862"/>
<polyline stroke="#ff0000" stroke-width="4" points="612,860 620,856 628,860"/>
<polyline stroke="#ff0000" stroke-width="4" points="835,848 855,838 870,828 885,822 900,820 910,825 920,840 930,850 945,848 960,843 980,852 1000,860 1000,862 1005,855 1030,850 1050,845 1070,843 1080,845 1122,845"/>
</g>
<polyline fill="none" stroke="#ffff00" stroke-width="2" points="5,833 585,833 594,805 601,833 750,833 758,805 765,833 1122,833"/>
<line x1="594" y1="805" x2="594" y2="862" stroke="#00ff00" stroke-width="3"/>
<line x1="758" y1="805" x2="758" y2="862" stroke="#00ff00" stroke-width="3"/>
<text x="597" y="805" fill="#fff" font-size="11">←买</text>
<text x="761" y="805" fill="#fff" font-size="11">←买</text>
<ellipse cx="893" cy="591" rx="22" ry="314" fill="none" stroke="#d8d000" stroke-width="1.2"/>
<rect x="389" y="796" width="124" height="34" fill="none" stroke="#ff2020" stroke-width="1.5"/>
<g stroke="#ff3030" stroke-width="2.5" fill="#ff3030">
<line x1="303" y1="488" x2="284" y2="425"/><polygon points="281,416 277,430 290,427"/>
<line x1="320" y1="655" x2="280" y2="618"/><polygon points="272,612 278,626 287,616"/>
<line x1="657" y1="676" x2="639" y2="624"/><polygon points="636,615 633,628 645,625"/>
<line x1="936" y1="720" x2="895" y2="680"/><polygon points="889,673 893,688 902,679"/>
<line x1="183" y1="718" x2="230" y2="850"/><polygon points="233,858 224,846 236,843"/>
<line x1="655" y1="783" x2="625" y2="842"/><polygon points="621,850 620,836 631,841"/>
<line x1="370" y1="807" x2="357" y2="858"/><polygon points="355,866 351,853 363,855"/>
</g>
<g fill="#ffff00" font-size="15">
<text x="302" y="500">阳线为第三条件</text>
<text x="322" y="665">宽带翻红为第二条件</text>
<text x="624" y="690">第二条件不满足</text>
<text x="940" y="734">三个条件都满足</text>
<text x="175" y="740">庄家线消失为第一条件</text>
<text x="659" y="780">第一条件满足</text>
</g>
</svg>
</body></html>
